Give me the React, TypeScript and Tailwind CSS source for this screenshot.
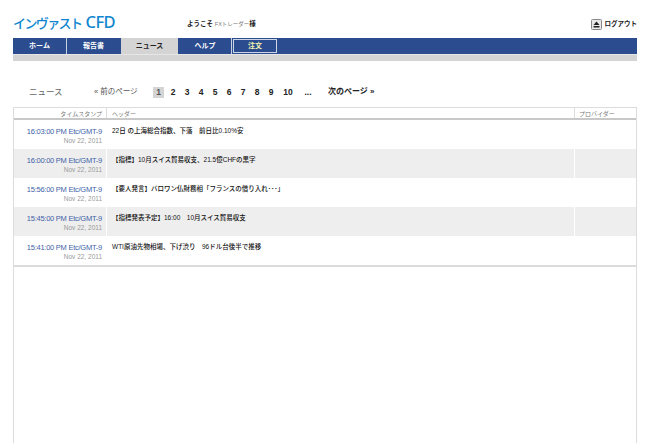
const jp = '[font-family:"Liberation_Sans","Noto_Sans_CJK_JP",sans-serif]';

const rows = [
  { time: '16:03:00 PM Etc/GMT-9', head: '22日 の上海総合指数、下落　前日比0.10%安' },
  { time: '16:00:00 PM Etc/GMT-9', head: '【指標】10月スイス貿易収支、21.5億CHFの黒字' },
  { time: '15:56:00 PM Etc/GMT-9', head: '【要人発言】バロワン仏財務相「フランスの借り入れ･･･」' },
  { time: '15:45:00 PM Etc/GMT-9', head: '【指標発表予定】16:00　10月スイス貿易収支' },
  { time: '15:41:00 PM Etc/GMT-9', head: 'WTI原油先物相場、下げ渋り　96ドル台後半で推移' },
];

function NavTab({ label, width, active }: { label: string; width: string; active?: boolean }) {
  return (
    <div
      className={`${width} h-full flex items-center justify-center text-[7px] font-bold mr-px ${
        active ? 'bg-[#d4d4d4] text-[#222]' : 'bg-[#2b4d8f] text-white'
      }`}
    >
      {label}
    </div>
  );
}

export default function App() {
  return (
    <div className={`w-[650px] h-[443px] overflow-hidden bg-white px-[13px] ${jp}`}>
      {/* Header */}
      <div className="h-[38px] flex items-center relative">
        <div className="w-[174px] pt-[6px] flex items-baseline leading-none text-[#0f86cf] font-medium whitespace-nowrap">
          <span className="text-[13px] tracking-[-1.6px] font-['Noto_Sans_CJK_JP']">インヴァスト</span>
          <span className="ml-[4px] text-[16.5px] tracking-[-0.5px] font-['Noto_Sans']">CFD</span>
        </div>
        <div className="text-[6.5px] font-bold text-[#222] pt-[9px] whitespace-nowrap">
          ようこそ <span className="font-normal text-[#777] text-[5.5px]">FXトレーダー</span>様
        </div>
        <div className="ml-auto flex items-center gap-[3px] pt-[10px]">
          <svg width="11" height="11" viewBox="0 0 11 11">
            <rect x="0.5" y="0.5" width="10" height="10" rx="1" fill="#e8e8e8" stroke="#888" />
            <path d="M5.5 2.5 L8.5 6 H2.5 Z M2.5 7 H8.5 V8.5 H2.5 Z" fill="#222" />
          </svg>
          <span className="text-[6.5px] font-bold text-[#222]">ログアウト</span>
        </div>
      </div>

      {/* Nav */}
      <div className="h-[17px] flex items-stretch bg-[#2b4d8f] border-b border-[#e6e6e6]">
        <NavTab label="ホーム" width="w-[53px]" />
        <div className="w-px bg-[#c9d2e3] -ml-px" />
        <NavTab label="報告書" width="w-[53px]" />
        <NavTab label="ニュース" width="w-[57px]" active />
        <NavTab label="ヘルプ" width="w-[52px]" />
        <div className="w-px bg-[#c9d2e3] -ml-px" />
        <div className="ml-px my-px w-[44px] border border-[#cdd6e6] flex items-center justify-center text-[7px] font-bold text-[#f4f1b0]">
          注文
        </div>
      </div>
      <div className="h-[6px] bg-[#d4d4d4]" />

      {/* Pagination */}
      <div className="h-[46px] pt-[16px] flex items-center">
        <div className="w-[66px] pl-[16px] text-[8.5px] text-[#666] whitespace-nowrap">ニュース</div>
        <div className="ml-[15px] w-[59px] text-[7.5px] text-[#555] whitespace-nowrap">« 前のページ</div>
        <div className="flex items-center font-bold text-[#222] text-[8.5px]">
          <span className="w-[11px] h-[11px] bg-[#d4d4d4] text-[#555] flex items-center justify-center mr-[2px]">1</span>
          <span className="w-[14px] text-center">2</span>
          <span className="w-[14px] text-center">3</span>
          <span className="w-[14px] text-center">4</span>
          <span className="w-[14px] text-center">5</span>
          <span className="w-[14px] text-center">6</span>
          <span className="w-[14px] text-center">7</span>
          <span className="w-[14px] text-center">8</span>
          <span className="w-[14px] text-center">9</span>
          <span className="w-[20px] text-center">10</span>
          <span className="w-[20px] text-center">...</span>
        </div>
        <div className="ml-[10px] text-[8px] font-bold text-[#222] whitespace-nowrap">次のページ »</div>
      </div>

      {/* Table */}
      <div className="h-[336px] border-x border-t border-[#dcdcdc]">
        <div className="h-[10px] box-content flex border-b-2 border-[#c8c8c8] text-[#777] text-[6px]">
          <div className="w-[93px] pr-[4px] text-right leading-[13px] border-r border-[#dcdcdc]">タイムスタンプ</div>
          <div className="flex-1 pl-[5px] leading-[13px] border-r border-[#dcdcdc]">ヘッダー</div>
          <div className="w-[61px] pl-[4px] leading-[13px]">プロバイダー</div>
        </div>
        <div className="border-b-2 border-[#dcdcdc]">
          {rows.map((row, i) => (
            <div key={row.time} className={`h-[29px] flex ${i % 2 ? 'bg-[#eeeeee]' : 'bg-white'}`}>
              <div className="w-[93px] pr-[4px] pt-[7px] text-right border-r border-white whitespace-nowrap font-['Liberation_Sans']">
                <div className="text-[#3f5fa8] text-[7.5px] leading-[9px] tracking-[-0.25px]">{row.time}</div>
                <div className="text-[#999] text-[6.5px] leading-[9px]">Nov 22, 2011</div>
              </div>
              <div className="flex-1 pl-[5px] pt-[6px] text-[6.5px] font-medium leading-[10px] text-[#111] border-r border-white whitespace-nowrap">
                {row.head}
              </div>
              <div className="w-[61px]" />
            </div>
          ))}
        </div>
      </div>
    </div>
  );
}
